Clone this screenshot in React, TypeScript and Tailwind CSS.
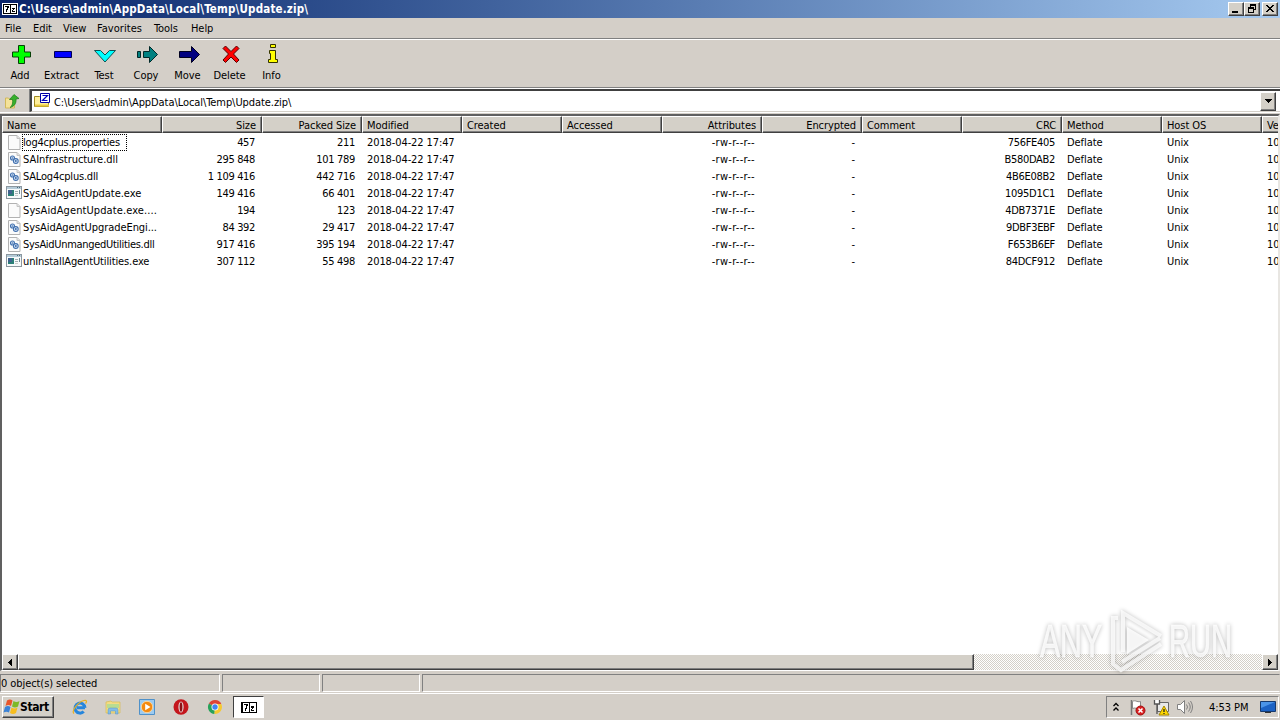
import type { ReactNode } from "react";

const raised =
  "bg-[#d4d0c8] border border-t-white border-l-white border-r-[#404040] border-b-[#404040] shadow-[inset_-1px_-1px_0_#808080]";

type Align = "left" | "right";
const columns: { name: string; align: Align; width: string; tracking: string }[] = [
  { name: "Name", align: "left", width: "w-[160px]", tracking: "" },
  { name: "Size", align: "right", width: "w-[100px]", tracking: "tracking-[-0.35px]" },
  { name: "Packed Size", align: "right", width: "w-[100px]", tracking: "tracking-[-0.3px]" },
  { name: "Modified", align: "left", width: "w-[100px]", tracking: "tracking-[-0.1px]" },
  { name: "Created", align: "left", width: "w-[100px]", tracking: "" },
  { name: "Accessed", align: "left", width: "w-[100px]", tracking: "" },
  { name: "Attributes", align: "right", width: "w-[100px]", tracking: "tracking-[0.3px]" },
  { name: "Encrypted", align: "right", width: "w-[100px]", tracking: "" },
  { name: "Comment", align: "left", width: "w-[100px]", tracking: "" },
  { name: "CRC", align: "right", width: "w-[100px]", tracking: "tracking-[-0.3px]" },
  { name: "Method", align: "left", width: "w-[100px]", tracking: "" },
  { name: "Host OS", align: "left", width: "w-[100px]", tracking: "" },
  { name: "Version", align: "left", width: "w-[100px]", tracking: "" },
];

type Kind = "file" | "dll" | "exe";
const files: [Kind, string, string, string, string, string][] = [
  ["file", "log4cplus.properties", "457", "211", "756FE405", "tracking-[-0.2px]"],
  ["dll", "SAInfrastructure.dll", "295 848", "101 789", "B580DAB2", "tracking-[-0.05px]"],
  ["dll", "SALog4cplus.dll", "1 109 416", "442 716", "4B6E08B2", "tracking-[-0.2px]"],
  ["exe", "SysAidAgentUpdate.exe", "149 416", "66 401", "1095D1C1", "tracking-[-0.03px]"],
  ["file", "SysAidAgentUpdate.exe....", "194", "123", "4DB7371E", "tracking-[0.1px]"],
  ["dll", "SysAidAgentUpgradeEngi...", "84 392", "29 417", "9DBF3EBF", "tracking-[-0.07px]"],
  ["dll", "SysAidUnmangedUtilities.dll", "917 416", "395 194", "F653B6EF", "tracking-[-0.3px]"],
  ["exe", "unInstallAgentUtilities.exe", "307 112", "55 498", "84DCF912", "tracking-[-0.12px]"],
];

function FileIcon({ kind }: { kind: Kind }) {
  if (kind === "exe")
    return (
      <svg className="mb-[2px] size-4 shrink-0" viewBox="0 0 16 16" shapeRendering="crispEdges">
        <rect x="0" y="1" width="16" height="13" fill="#8c979f" />
        <rect x="1" y="2" width="14" height="11" fill="#f7fafb" />
        <rect x="1" y="2" width="14" height="2" fill="#b5cbd8" />
        <rect x="11" y="2" width="1" height="1" fill="#4a6e80" />
        <rect x="13" y="2" width="1" height="1" fill="#4a6e80" />
        <rect x="2" y="5" width="6" height="6" fill="#2c8078" />
        <rect x="2" y="5" width="4" height="4" fill="#41638f" />
        <rect x="9" y="6" width="3" height="1" fill="#a3b0b3" />
        <rect x="9" y="8" width="3" height="1" fill="#a3b0b3" />
        <rect x="13" y="5" width="1" height="4" fill="#6c8a94" />
        <rect x="9" y="10" width="3" height="1" fill="#ccc" />
      </svg>
    );
  return (
    <svg className="mb-[2px] size-4 shrink-0" viewBox="0 0 16 16">
      <path d="M2.500 1.500H11l3 3v11H2.500z" fill="#fbfbfb" stroke="#b2b2b2" />
      <path d="M11 1.500v3h3" fill="#e4e4e4" stroke="#c4c4c4" />
      {kind === "dll" && (
        <g fill="#dfeaf8" stroke="#3f6fae" strokeWidth="1.100">
          <circle cx="6.500" cy="7" r="2" />
          <circle cx="9.800" cy="10" r="2.400" />
          <circle cx="9.800" cy="10" r=".5" />
          <circle cx="6.500" cy="7" r=".3" />
        </g>
      )}
    </svg>
  );
}

function SevenZip({ className }: { className: string }) {
  return (
    <svg className={className} viewBox="0 0 16 12" shapeRendering="crispEdges">
      <rect width="16" height="12" fill="#fff" />
      <path d="M1 1h14v10H1z" fill="#000" />
      <path d="M2 2h6v8H2z" fill="#fff" />
      <path d="M9 2h5v8H9z" fill="#fff" />
      <path d="M3 3h4v2H6v2H5v2H4V6h1V4H3z" fill="#000" />
      <path d="M10 5h3v1h-1v1h-1v1h2v1h-3V7h1V6h-1z" fill="#000" />
    </svg>
  );
}

const tools: { label: string; width: string; icon: ReactNode }[] = [
  {
    label: "Add",
    width: "w-[40px]",
    icon: <path d="M9.500 1.500h6v6.500h6v5h-6v6.500h-6v-6.500h-6V8h6z" fill="#0f0" stroke="#064006" />,
  },
  {
    label: "Extract",
    width: "w-[43px]",
    icon: <path d="M3.500 7.500h17v6h-17z" fill="#00f" stroke="#000050" />,
  },
  {
    label: "Test",
    width: "w-[42px]",
    icon: <path d="M1.500 6.500h6l4.500 4.500 4.500-4.500h6L12 18z" fill="#0ff" stroke="#105050" />,
  },
  {
    label: "Copy",
    width: "w-[42px]",
    icon: (
      <g fill="#008080" stroke="#002828">
        <path d="M2.500 7.500h3v6h-3z" />
        <path d="M8.500 7.500h6v-5l8 8-8 8v-5h-6z" />
      </g>
    ),
  },
  {
    label: "Move",
    width: "w-[41px]",
    icon: <path d="M2.500 7.500h12v-5l8 8-8 8v-5h-12z" fill="#000080" stroke="#000020" />,
  },
  {
    label: "Delete",
    width: "w-[43px]",
    icon: (
      <path
        d="M4 4.500l2.500-2.500 5.500 5.500L17.500 2 20 4.500 14.500 10 20 16 17.500 18.500 12 13 6.500 18.500 4 16 9.500 10z"
        fill="#f00"
        stroke="#500"
      />
    ),
  },
  {
    label: "Info",
    width: "w-[41px]",
    icon: (
      <g fill="#ff0" stroke="#333300">
        <path d="M9.500 .5h5v3h-5z" />
        <path d="M8.500 6.500h6v9h2v3h-9v-3h2v-6h-1z" />
      </g>
    ),
  },
];

function Caption({ children, gap }: { children: ReactNode; gap?: boolean }) {
  return (
    <div className={`${raised} flex h-[14px] w-[16px] items-center justify-center ${gap ? "ml-[2px]" : ""}`}>
      <svg className="h-[10px] w-[12px]" viewBox="0 0 12 10" shapeRendering="crispEdges">
        {children}
      </svg>
    </div>
  );
}

function Cell({ i, children }: { i: number; children?: ReactNode }) {
  const c = columns[i];
  return (
    <div
      className={`${c.width} ${c.tracking} shrink-0 pl-[5px] ${c.align === "right" ? "pr-[7px] text-right" : ""}`}
    >
      {children}
    </div>
  );
}

function Tray() {
  return (
    <div className="flex h-[22px] w-[173px] items-center border border-t-[#808080] border-r-white border-b-white border-l-[#808080] pl-[5px]">
      <svg className="h-[10px] w-[8px]" viewBox="0 0 8 10" fill="none" stroke="#000" strokeWidth="1.300">
        <path d="M1.500 4L4 1.500 6.500 4M1.500 8.500L4 6l2.500 2.500" />
      </svg>
      <svg className="ml-[9px] h-[17px] w-[17px]" viewBox="0 0 17 17">
        <path d="M2.500 1v15" stroke="#777" strokeWidth="1.500" />
        <path d="M3.500 2.500c3-2 4 1 8 0v7c-4 1-5-1.500-8 0z" fill="#fff" stroke="#888" />
        <circle cx="11.500" cy="11.500" r="4.500" fill="#d92020" stroke="#a01010" />
        <path d="M9.500 9.500l4 4m0-4l-4 4" stroke="#fff" strokeWidth="1.600" />
      </svg>
      <svg className="ml-[7px] h-[17px] w-[17px]" viewBox="0 0 17 17">
        <path d="M4.500 3.500h11v9h-11z" fill="#e8e8e8" stroke="#666" />
        <path d="M1.500 1v4h5V1M4 5v10" fill="#fff" stroke="#555" strokeWidth="1.300" />
        <path d="M11 7l5 9H6z" fill="#ffd800" stroke="#a88800" />
        <path d="M11 10v3m0 1v1" stroke="#222" strokeWidth="1.300" />
      </svg>
      <svg className="ml-[6px] h-[16px] w-[17px]" viewBox="0 0 17 16" fill="none" stroke="#808080">
        <path d="M1.500 5.500h3l4-4v13l-4-4h-3z" fill="#fff" />
        <path d="M10.500 5.500q2 2.500 0 5M12.500 3.500q3.500 4.500 0 9M14.500 2q4 6 0 12" />
      </svg>
      <span className="ml-[16px] w-[40px] tracking-[-0.05px] whitespace-nowrap">4:53 PM</span>
      <svg className="ml-[11px] h-[14px] w-[16px]" viewBox="0 0 16 14">
        <path d="M.5 1.500h15v10H.5z" fill="#1c62c4" stroke="#16396d" />
        <path d="M1 2h14L1 8z" fill="#4b94e8" />
        <path d="M5 12h6v1H5z" fill="#333" />
      </svg>
    </div>
  );
}

export default function App() {
  return (
    <div className="relative flex h-[720px] w-[1280px] flex-col overflow-hidden bg-[#d4cfc8] font-['DejaVu_Sans_Condensed','DejaVu_Sans',sans-serif] text-[11px] leading-[13px] tracking-[-0.07px] text-black [font-stretch:condensed]">
      <header className="flex h-[18px] shrink-0 items-center bg-linear-to-r from-[#0a246a] to-[#a6caf0] pr-[2px] pl-[2px]">
        <SevenZip className="mr-px h-[12px] w-[16px]" />
        <h1 className="text-[11.500px] font-bold tracking-[0.17px] text-white">
          C:\Users\admin\AppData\Local\Temp\Update.zip\
        </h1>
        <div className="ml-auto flex">
          <Caption>
            <rect x="2" y="7" width="6" height="2" />
          </Caption>
          <Caption>
            <path d="M4 0h6v6H8V5h1V2H5v1H4zM2 3h6v6H2zm1 2v3h4V5z" fillRule="evenodd" />
          </Caption>
          <Caption gap>
            <path d="M2 1h2v1h1v1h2V2h1V1h2v1H9v1H8v1H7v1h1v1h1v1h1v1H8V7H7V6H5v1H4v1H2V7h1V6h1V5h1V4H4V3H3V2H2z" />
          </Caption>
        </div>
      </header>

      <nav className="flex h-[21px] shrink-0 items-center border-b border-[#808080] pl-[5px]">
        <span className="w-[28px]">File</span>
        <span className="w-[30px]">Edit</span>
        <span className="w-[34px]">View</span>
        <span className="w-[57px] tracking-[0.05px]">Favorites</span>
        <span className="w-[37px]">Tools</span>
        <span>Help</span>
      </nav>

      <div className="flex h-[49px] shrink-0 border-t border-b border-t-white border-b-[#808080] pt-[4px]">
        {tools.map((t) => (
          <div key={t.label} className={`${t.width} flex shrink-0 flex-col items-center`}>
            <svg className="ml-[2px] h-[25px] w-[24px]" viewBox="0 0 24 25">
              {t.icon}
            </svg>
            <span>{t.label}</span>
          </div>
        ))}
      </div>

      <div className="flex h-[25px] shrink-0 border-t border-b border-white">
        <div className="flex w-[30px] items-center justify-center border-r border-[#808080] pr-[5px]">
          <svg className="size-4" viewBox="0 0 16 16">
            <path d="M1.500 5h3l1 1h5v9h-9z" fill="#f4e29a" stroke="#d2b85a" />
            <path
              d="M6 14.500c2.500-1.500 3-5 2.500-8H5.500l4.500-5 5 4-3 .5c.5 4-1.500 7.500-6 8.500z"
              fill="#36b02c"
              stroke="#1e7d1a"
              strokeWidth=".7"
            />
          </svg>
        </div>
        <div className="flex flex-1 items-center border-t-2 border-b border-l-2 border-t-[#404040] border-b-[#d4d0c8] border-l-[#404040] bg-white pr-[4px] pl-[2px]">
          <svg className="mr-[4px] h-[16px] w-[16px]" viewBox="0 0 16 16">
            <path d="M.5 3.500h5l1 1h8v9H.5z" fill="#ffef9c" stroke="#a08a20" />
            <path d="M1 12.500h14" stroke="#e8c840" strokeWidth="2" />
            <path d="M6.500 .5h9v9h-9z" fill="#fff" stroke="#0000a0" />
            <path d="M8.500 2.500h5l-5 5h5" fill="none" stroke="#0000c0" strokeWidth="1.200" />
          </svg>
          <span className="pt-[2px]">C:\Users\admin\AppData\Local\Temp\Update.zip\</span>
          <div className={`${raised} ml-auto flex h-[19px] w-[16px] items-center justify-center`}>
            <svg className="h-[4px] w-[7px]" viewBox="0 0 7 4" shapeRendering="crispEdges">
              <path d="M0 0h7v1H6v1H5v1H4v1H3V3H2V2H1V1H0z" />
            </svg>
          </div>
        </div>
      </div>

      <main className="mt-px flex h-[557px] shrink-0 flex-col border-t-2 border-r-2 border-b border-l-2 border-t-[#606060] border-r-[#e8e6e2] border-b-white border-l-[#606060] bg-white">
        <div className="flex h-[17px] shrink-0 overflow-hidden">
          {columns.map((c) => (
            <div
              key={c.name}
              className={`${c.width} ${raised} shrink-0 pt-[2px] pl-[4px] ${c.align === "right" ? "pr-[5px] text-right" : ""}`}
            >
              {c.name}
            </div>
          ))}
        </div>
        <div className="flex-1 overflow-hidden pt-px">
          {files.map(([kind, name, size, packed, crc, tracking], i) => (
            <div key={name} className="flex h-[17px] items-center whitespace-nowrap">
              <div className="flex w-[160px] shrink-0 items-center pl-[4px]">
                <FileIcon kind={kind} />
                <span
                  className={`${tracking} ${i === 0 ? "w-[105px] border border-dotted border-black py-px" : "pl-px"}`}
                >
                  {name}
                </span>
              </div>
              <Cell i={1}>{size}</Cell>
              <Cell i={2}>{packed}</Cell>
              <Cell i={3}>2018-04-22 17:47</Cell>
              <Cell i={4} />
              <Cell i={5} />
              <Cell i={6}>-rw-r--r--</Cell>
              <Cell i={7}>-</Cell>
              <Cell i={8} />
              <Cell i={9}>{crc}</Cell>
              <Cell i={10}>Deflate</Cell>
              <Cell i={11}>Unix</Cell>
              <Cell i={12}>10</Cell>
            </div>
          ))}
        </div>
        <div className="flex h-[16px] shrink-0 bg-[repeating-conic-gradient(#fff_0_25%,#d4d0c8_0_50%)] bg-[length:2px_2px]">
          <div className={`${raised} flex w-[16px] items-center justify-center`}>
            <svg className="h-[7px] w-[4px]" viewBox="0 0 4 7" shapeRendering="crispEdges">
              <path d="M4 0v7H3V6H2V5H1V4H0V3h1V2h1V1h1V0z" />
            </svg>
          </div>
          <div className={`${raised} w-[956px]`} />
          <div className={`${raised} ml-auto flex w-[16px] items-center justify-center`}>
            <svg className="h-[7px] w-[4px]" viewBox="0 0 4 7" shapeRendering="crispEdges">
              <path d="M0 0v7h1V6h1V5h1V4h1V3H3V2H2V1H1V0z" />
            </svg>
          </div>
        </div>
      </main>

      <footer className="mt-[3px] flex h-[18px] shrink-0 gap-[2px]">
        <div className="w-[220px] border border-t-[#808080] border-r-white border-b-white border-l-[#808080] pt-[2px]">
          0 object(s) selected
        </div>
        <div className="w-[98px] border border-t-[#808080] border-r-white border-b-white border-l-[#808080]" />
        <div className="w-[98px] border border-t-[#808080] border-r-white border-b-white border-l-[#808080]" />
        <div className="flex-1 border border-t-[#808080] border-r-transparent border-b-white border-l-[#808080]" />
      </footer>

      <div className="mt-px flex h-[27px] shrink-0 items-center border-t border-white pr-px pl-[2px]">
        <button className={`${raised} flex h-[22px] w-[52px] items-center text-[12px] font-bold tracking-[-0.4px]`}>
          <svg className="h-[16px] w-[17px]" viewBox="0 0 17 16">
            <path d="M4 1.500q3-2 5.500 0L8 7Q5.500 5 2.500 7z" fill="#e8552a" />
            <path d="M10.500 2q3 2 6 0L15 7.500q-3 2-6 0z" fill="#7db928" />
            <path d="M2 8q3-2 5.500 0L6 13.500Q3.500 12 .5 13.500z" fill="#3b82d6" />
            <path d="M8.500 8.500q3 2 6 0L13 14q-3 2-6 0z" fill="#f7bd1e" />
          </svg>
          Start
        </button>
        <div className="flex items-center pl-[18px]">
          <svg className="size-4" viewBox="0 0 16 16">
            <path d="M13 8.800H5M13 8.800a5 5 0 1 0-1.300 3.700" fill="none" stroke="#2686dc" strokeWidth="3" />
            <path d="M2 14.500C-1 12 6 3 12 1.500c3-.7 3 1.500 1.500 3" fill="none" stroke="#e8b020" strokeWidth="1.200" />
          </svg>
          <svg className="ml-[17px] size-4" viewBox="0 0 16 16">
            <path d="M1 3l5-1 1 1h8v11H1z" fill="#f3dc82" stroke="#d5ba58" strokeWidth=".7" />
            <path d="M2 5h12v4H2z" fill="#b9dc91" />
            <path d="M3 15v-4q0-2 2-2h6q2 0 2 2v4h-2.500v-3h-5v3z" fill="#83bde8" stroke="#5592c5" strokeWidth=".5" />
          </svg>
          <svg className="ml-[18px] size-4" viewBox="0 0 16 16">
            <path d="M.5 .5h15v15H.5z" fill="#9dcbf0" stroke="#4f91c9" />
            <circle cx="8" cy="8" r="5.700" fill="#f48a10" stroke="#fbd59c" />
            <path d="M6.200 4.800L11.500 8l-5.300 3.200z" fill="#fff" />
          </svg>
          <svg className="ml-[18px] size-4" viewBox="0 0 16 16">
            <ellipse cx="8" cy="8" rx="7.500" ry="7.700" fill="#c4161c" />
            <ellipse cx="8" cy="8" rx="2.600" ry="5.500" fill="#e9dada" />
            <ellipse cx="8" cy="8" rx="1.400" ry="4.800" fill="#8d1015" />
          </svg>
          <svg className="ml-[18px] size-4" viewBox="0 0 16 16">
            <path d="M8 8L1.900 4.500A7 7 0 0 1 14.300 5z" fill="#df4436" />
            <path d="M8 8L1.900 4.500A7 7 0 0 0 7.500 15z" fill="#27a25a" />
            <path d="M8 8l-.5 7A7 7 0 0 0 14.300 5H8z" fill="#f5c932" />
            <circle cx="8" cy="8" r="3.500" fill="#fff" />
            <circle cx="8" cy="8" r="2.700" fill="#4285f4" />
          </svg>
        </div>
        <div className="ml-[10px] flex h-[22px] w-[31px] items-center justify-center border border-t-[#404040] border-r-white border-b-white border-l-[#404040] bg-white">
          <SevenZip className="h-[13px] w-[18px]" />
        </div>
        <div className="ml-auto">
          <Tray />
        </div>
      </div>

      <svg
        className="absolute top-[600px] left-[1030px] h-[80px] w-[230px] drop-shadow-[0_0_2px_#00000055]"
        viewBox="0 0 230 80"
      >
        <g
          fill="#fff"
          fillOpacity=".8"
          stroke="#fff"
          strokeOpacity=".6"
          fontFamily="Liberation Sans Narrow, Liberation Sans"
          fontSize="47"
        >
          <text x="10" y="57" textLength="62" lengthAdjust="spacingAndGlyphs">
            ANY
          </text>
          <text x="139" y="57" textLength="63" lengthAdjust="spacingAndGlyphs">
            RUN
          </text>
        </g>
        <g fill="none" stroke="#fff" strokeOpacity=".75" strokeWidth="4">
          <path d="M93 52V13l38 23" />
          <path d="M88 18h-5v46l8 6 40-26" />
          <path d="M92 62l38-24" />
        </g>
        <path d="M97 27l22 13-22 14z" fill="#fff" fillOpacity=".85" />
      </svg>
    </div>
  );
}
